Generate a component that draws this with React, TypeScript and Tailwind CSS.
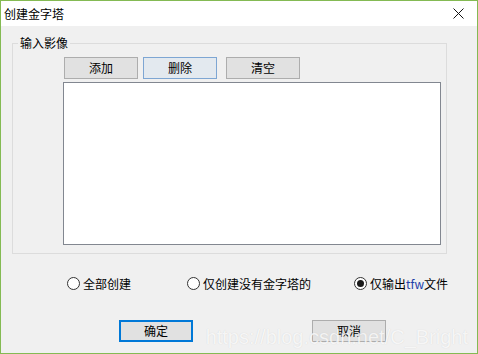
import React from "react";

// ── Pieces ─────────────────────────────────────────────────────────────────────

const font = { fontFamily: '"Noto Sans CJK SC", "Microsoft YaHei", sans-serif' };

function Button({
  label,
  variant = "normal",
  className = "",
}: {
  label: string;
  variant?: "normal" | "hover" | "default";
  className?: string;
}) {
  const look =
    variant === "hover"
      ? "border border-[#7ea6d3] bg-[#e3e9ef]"
      : variant === "default"
        ? "border-2 border-[#0078d7] bg-[#e1e1e1]"
        : "border border-[#adadad] bg-[#e1e1e1]";
  return (
    <div
      className={`flex h-[22px] w-[74px] shrink-0 items-center justify-center text-[12px] leading-none text-black ${look} ${className}`}
    >
      {label}
    </div>
  );
}

function Radio({ label, checked = false }: { label: React.ReactNode; checked?: boolean }) {
  return (
    <div className="flex items-center gap-[3px] text-[12px] leading-none text-black">
      <span className="flex h-[13px] w-[13px] items-center justify-center rounded-full border border-[#333] bg-white">
        {checked && <span className="h-[7px] w-[7px] rounded-full bg-[#1a1a1a]" />}
      </span>
      <span>{label}</span>
    </div>
  );
}

// ── Main Export ────────────────────────────────────────────────────────────────

export default function App() {
  return (
    <div
      className="relative flex h-[354px] w-[478px] flex-col overflow-hidden border border-[#84ba53] bg-[#f0f0f0]"
      style={font}
    >
      {/* Title bar */}
      <div className="flex h-[25px] shrink-0 items-center justify-between bg-white pl-[3px] pr-[13px]">
        <span className="text-[12px] leading-none text-black">创建金字塔</span>
        <svg width="11" height="11" viewBox="0 0 11 11" aria-label="close">
          <path d="M0.5 0.5 L10.5 10.5 M10.5 0.5 L0.5 10.5" stroke="#111" strokeWidth="1" />
        </svg>
      </div>

      {/* Group box */}
      <div className="relative ml-[11px] mt-[17px] h-[211px] w-[435px] shrink-0 border border-[#dcdcdc] pl-[51px] pt-[13px]">
        <span className="absolute -top-[9px] left-[5px] bg-[#f0f0f0] px-[2px] text-[12px] leading-[16px] text-black">
          输入影像
        </span>
        <div className="flex">
          <Button label="添加" />
          <Button label="删除" variant="hover" className="ml-[5px]" />
          <Button label="清空" className="ml-[9px]" />
        </div>
        <div className="-ml-[1px] mt-[3px] h-[163px] w-[378px] border border-[#828790] bg-white" />
      </div>

      {/* Radio options */}
      <div className="mt-[23px] flex pl-[66px]">
        <div className="w-[120px]">
          <Radio label="全部创建" />
        </div>
        <div className="w-[167px]">
          <Radio label="仅创建没有金字塔的" />
        </div>
        <Radio
          checked
          label={
            <>
              仅输出<span className="text-[#1f3fa8]">tfw</span>文件
            </>
          }
        />
      </div>

      {/* Footer buttons */}
      <div className="mt-[30px] flex pl-[118px]">
        <Button label="确定" variant="default" className="w-[73px]" />
        <Button label="取消" className="ml-[119px] w-[73px]" />
      </div>

      {/* Watermark */}
      <span
        className="pointer-events-none absolute bottom-[6px] right-[9px] text-[20px] leading-none text-white/80"
        style={{ fontFamily: '"Liberation Sans", Arial, sans-serif', textShadow: "0 0 1px rgba(0,0,0,0.15)" }}
      >
        https://blog.csdn.net/C_Bright
      </span>
    </div>
  );
}
